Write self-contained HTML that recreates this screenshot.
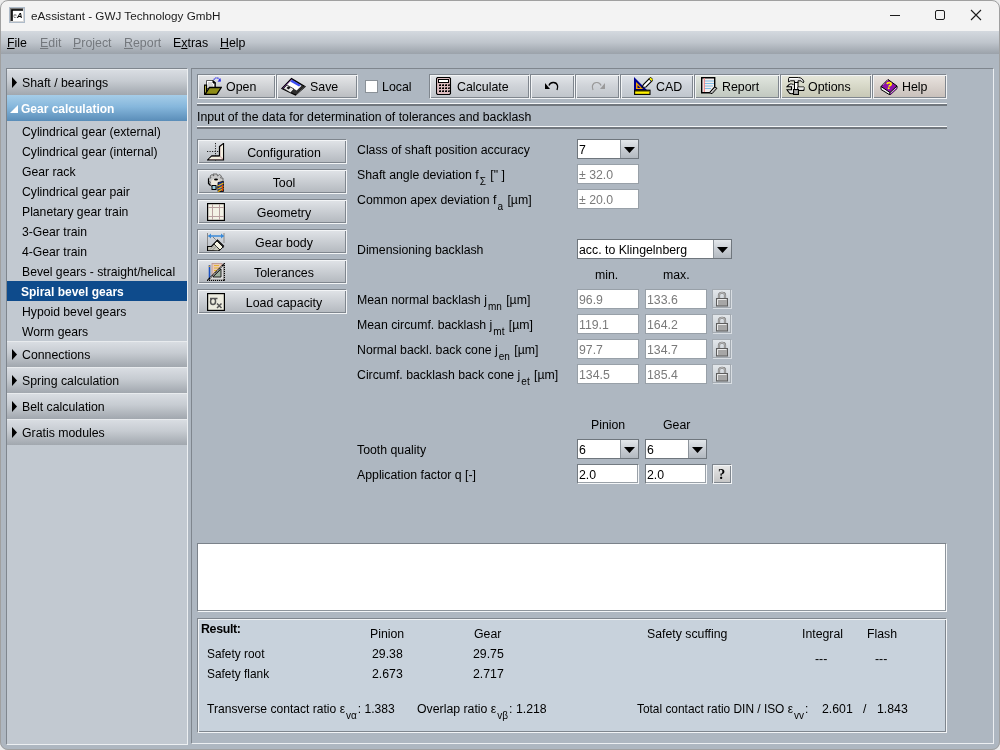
<!DOCTYPE html>
<html><head><meta charset="utf-8"><title>eAssistant</title>
<style>
*{margin:0;padding:0;box-sizing:border-box}
html,body{width:1000px;height:750px;overflow:hidden;background:#ececec}
body{font-family:"Liberation Sans",sans-serif;color:#000;position:relative}
.t{position:absolute;white-space:nowrap;line-height:14px}
.b{position:absolute}
.ic{position:absolute;line-height:0}
.ic svg{display:block}
sub{font-size:10px;vertical-align:-6px;line-height:0;position:relative;margin-left:1px;margin-right:1px}
.u{text-decoration:underline;text-underline-offset:1px}
</style></head><body>
<div class="b" style="left:0;top:0;width:1000px;height:750px;background:#aeb7c1;border-radius:8px;overflow:hidden;will-change:transform">
<div class="b" style="left:0px;top:0px;width:1000px;height:31px;background:#f3f3f3"></div>
<div class="ic" style="left:9px;top:7px"><svg width="16" height="16" viewBox="0 0 16 16">
<rect x="0.5" y="0.5" width="15" height="15" fill="#c6d0db" stroke="#aebbc9"/>
<path d="M1 1h14L1 15z" fill="#7a7a7a"/>
<path d="M15 1v14H1z" fill="#d6d6d6"/>
<rect x="3" y="3" width="11" height="11" fill="#fff"/>
<path d="M3 14V3h11" fill="none" stroke="#000" stroke-width="1.6"/>
<text x="4.2" y="11" font-family="Liberation Sans" font-size="6.5" fill="#666">e</text>
<text x="8" y="11" font-family="Liberation Sans" font-size="7.5" font-weight="bold" font-style="italic" fill="#000">A</text>
</svg></div>
<div class="t" style="left:31px;top:9px;font-size:11.7px;color:#1b1b1b">eAssistant - GWJ Technology GmbH</div>
<div class="b" style="left:890px;top:15px;width:10px;height:1px;background:#1b1b1b"></div>
<div class="b" style="left:935px;top:10px;width:10px;height:10px;border:1px solid #1b1b1b;border-radius:2px"></div>
<div class="ic" style="left:970px;top:9px"><svg width="12" height="12" viewBox="0 0 12 12"><path d="M1 1l10 10M11 1L1 11" stroke="#1b1b1b" stroke-width="1.1"/></svg></div>
<div class="b" style="left:0px;top:31px;width:1000px;height:23px;background:linear-gradient(#d4d9df,#bfc5cc 50%,#9ba2aa)"></div>
<div class="t" style="left:7px;top:36px;font-size:12.4px;"><span class="u">F</span>ile</div>
<div class="t" style="left:40px;top:36px;font-size:12.4px;color:#74787d"><span class="u">E</span>dit</div>
<div class="t" style="left:73px;top:36px;font-size:12.4px;color:#74787d"><span class="u">P</span>roject</div>
<div class="t" style="left:124px;top:36px;font-size:12.4px;color:#74787d"><span class="u">R</span>eport</div>
<div class="t" style="left:173px;top:36px;font-size:12.4px;">E<span class="u">x</span>tras</div>
<div class="t" style="left:220px;top:36px;font-size:12.4px;"><span class="u">H</span>elp</div>
<div class="b" style="left:6px;top:68px;width:182px;height:677px;background:#c2c9d1;border-left:1px solid #7f868e;border-top:1px solid #7f868e;border-right:1px solid #eceff2;border-bottom:1px solid #eceff2"></div>
<div class="b" style="left:7px;top:69px;width:180px;height:26px;border-top:1px solid #e8ebee;background:linear-gradient(#d9dde2,#c6cbd1 45%,#a1a7ae)"></div>
<div class="ic" style="left:12px;top:77px"><svg width="6" height="11" viewBox="0 0 6 11"><path d="M0 0l5 5.5L0 11z" fill="#000"/></svg></div>
<div class="t" style="left:22px;top:76px;font-size:12.3px;">Shaft / bearings</div>
<div class="b" style="left:7px;top:95px;width:180px;height:26px;background:linear-gradient(#a6cde8,#86b7dc 45%,#5a8db8)"></div>
<div class="ic" style="left:10px;top:105px"><svg width="8" height="8" viewBox="0 0 8 8"><path d="M0 8L8 0v8z" fill="#fff"/></svg></div>
<div class="t" style="left:21px;top:102px;font-size:12px;color:#fff;font-weight:bold">Gear calculation</div>
<div class="t" style="left:22px;top:125px;font-size:12.2px;">Cylindrical gear (external)</div>
<div class="t" style="left:22px;top:145px;font-size:12.2px;">Cylindrical gear (internal)</div>
<div class="t" style="left:22px;top:165px;font-size:12.2px;">Gear rack</div>
<div class="t" style="left:22px;top:185px;font-size:12.2px;">Cylindrical gear pair</div>
<div class="t" style="left:22px;top:205px;font-size:12.2px;">Planetary gear train</div>
<div class="t" style="left:22px;top:225px;font-size:12.2px;">3-Gear train</div>
<div class="t" style="left:22px;top:245px;font-size:12.2px;">4-Gear train</div>
<div class="t" style="left:22px;top:265px;font-size:12.2px;">Bevel gears - straight/helical</div>
<div class="b" style="left:7px;top:281px;width:180px;height:20px;background:#0e4b8c"></div>
<div class="t" style="left:21px;top:285px;font-size:12px;color:#fff;font-weight:bold">Spiral bevel gears</div>
<div class="t" style="left:22px;top:305px;font-size:12.2px;">Hypoid bevel gears</div>
<div class="t" style="left:22px;top:325px;font-size:12.2px;">Worm gears</div>
<div class="b" style="left:7px;top:341px;width:180px;height:26px;border-top:1px solid #e8ebee;background:linear-gradient(#d9dde2,#c6cbd1 45%,#a1a7ae)"></div>
<div class="ic" style="left:12px;top:349px"><svg width="6" height="11" viewBox="0 0 6 11"><path d="M0 0l5 5.5L0 11z" fill="#000"/></svg></div>
<div class="t" style="left:22px;top:348px;font-size:12.3px;">Connections</div>
<div class="b" style="left:7px;top:367px;width:180px;height:26px;border-top:1px solid #e8ebee;background:linear-gradient(#d9dde2,#c6cbd1 45%,#a1a7ae)"></div>
<div class="ic" style="left:12px;top:375px"><svg width="6" height="11" viewBox="0 0 6 11"><path d="M0 0l5 5.5L0 11z" fill="#000"/></svg></div>
<div class="t" style="left:22px;top:374px;font-size:12.3px;">Spring calculation</div>
<div class="b" style="left:7px;top:393px;width:180px;height:26px;border-top:1px solid #e8ebee;background:linear-gradient(#d9dde2,#c6cbd1 45%,#a1a7ae)"></div>
<div class="ic" style="left:12px;top:401px"><svg width="6" height="11" viewBox="0 0 6 11"><path d="M0 0l5 5.5L0 11z" fill="#000"/></svg></div>
<div class="t" style="left:22px;top:400px;font-size:12.3px;">Belt calculation</div>
<div class="b" style="left:7px;top:419px;width:180px;height:26px;border-top:1px solid #e8ebee;background:linear-gradient(#d9dde2,#c6cbd1 45%,#a1a7ae)"></div>
<div class="ic" style="left:12px;top:427px"><svg width="6" height="11" viewBox="0 0 6 11"><path d="M0 0l5 5.5L0 11z" fill="#000"/></svg></div>
<div class="t" style="left:22px;top:426px;font-size:12.3px;">Gratis modules</div>
<div class="b" style="left:191px;top:68px;width:803px;height:676px;border-left:1px solid #7f868e;border-top:1px solid #7f868e;border-right:1px solid #eceff2;border-bottom:1px solid #eceff2"></div>
<div class="b" style="left:197px;top:74px;width:79px;height:25px;background:linear-gradient(#e6e7e9,#d2d4d7 45%,#b9bcc0);border-left:1px solid #7f868e;border-top:1px solid #7f868e;border-right:1px solid #f2f4f6;border-bottom:1px solid #f2f4f6;box-shadow:inset 1px 1px 0 #f2f4f6,inset -1px -1px 0 #7f868e"></div>
<div class="t" style="left:226px;top:80px;font-size:12.4px;">Open</div>
<div class="ic" style="left:204px;top:77px"><svg width="18" height="18" viewBox="0 0 18 18">
<path d="M2.5 3.5h6.5l2.5 2.5v5.5h-9z" fill="#fff" stroke="#555" stroke-width="1"/>
<path d="M4 6h4M4 8h5M4 10h5" stroke="#aaa" stroke-width="1"/>
<path d="M9 3.5l2.5 2.5H9z" fill="#000" stroke="#000" stroke-width="1"/>
<path d="M11 11V6" stroke="#000" stroke-width="1.2"/>
<path d="M0.6 8.2h2v9H0.6z" fill="#d6d040" stroke="#000" stroke-width="1.2"/>
<path d="M1 17.3l4.5-6.8h11.8l-4.5 6.8z" fill="#8f8d17" stroke="#000" stroke-width="1.3"/>
<path d="M9.8 2.8c1.2-2.6 4.5-2.6 5.8 0" fill="none" stroke="#2828e8" stroke-width="1.1" stroke-dasharray="1.4 .7"/>
<path d="M13.5 4.8l3.5-.3-.6-3.4z" fill="#2828e8"/>
</svg></div>
<div class="b" style="left:276px;top:74px;width:82px;height:25px;background:linear-gradient(#e6e7e9,#d2d4d7 45%,#b9bcc0);border-left:1px solid #7f868e;border-top:1px solid #7f868e;border-right:1px solid #f2f4f6;border-bottom:1px solid #f2f4f6;box-shadow:inset 1px 1px 0 #f2f4f6,inset -1px -1px 0 #7f868e"></div>
<div class="t" style="left:310px;top:80px;font-size:12.4px;">Save</div>
<div class="ic" style="left:281px;top:77px"><svg width="25" height="19" viewBox="0 0 25 19">
<path d="M1 11.5L10.5 1.5l13.5 8-9.5 8.5z" fill="#2e2e2e" stroke="#000" stroke-width="1.2"/>
<path d="M1.5 11.5l9.5-9.5" stroke="#6a2a8a" stroke-width=".8"/>
<path d="M10.5 3l10 5.8-4.8 4.8-10-5.6z" fill="#fff"/>
<path d="M11 2.8l8.8 5.2-1.8 1.6-8.8-5z" fill="#3a4cf5"/>
<path d="M2.5 11.5l3.5-3.5 7 4-3.5 3.8z" fill="#e6e6e6" stroke="#000" stroke-width=".6"/>
<path d="M5.5 11l1.8-1.8 2.2 1.3-1.8 1.9z" fill="#111"/>
<path d="M15 17.5l9-8" stroke="#555" stroke-width="1"/>
</svg></div>
<div class="b" style="left:429px;top:74px;width:101px;height:25px;background:linear-gradient(#e3e6ea,#d0d4d9 45%,#bfc4ca);border-left:1px solid #7f868e;border-top:1px solid #7f868e;border-right:1px solid #f2f4f6;border-bottom:1px solid #f2f4f6;box-shadow:inset 1px 1px 0 #f2f4f6,inset -1px -1px 0 #7f868e"></div>
<div class="t" style="left:457px;top:80px;font-size:12.4px;">Calculate</div>
<div class="ic" style="left:436px;top:77px"><svg width="16" height="18" viewBox="0 0 16 18">
<path d="M1.5 0.5h12l1 1v15l-1 1h-12l-1-1v-15z" fill="#dcbcbf" stroke="#000" stroke-width="1.1"/>
<rect x="2.5" y="2.5" width="10" height="3" fill="#fff" stroke="#000" stroke-width="1"/>
<g fill="#000">
<path d="M3 8.5h2v-1h-1v1h-1zM6 8.5h2v-1h-1v1h-1zM9 8.5h2v-1h-1v1h-1zM12 8.5h2v-1h-1v1h-1z"/>
<path d="M3 11.5h2v-1h-1v1h-1zM6 11.5h2v-1h-1v1h-1zM9 11.5h2v-1h-1v1h-1zM12 11.5h2v-1h-1v1h-1z"/>
<path d="M3 14.5h2v-1h-1v1h-1zM6 14.5h2v-1h-1v1h-1zM9 14.5h2v-1h-1v1h-1zM12 14.5h2v-1h-1v1h-1z"/>
</g>
<g fill="#000"><rect x="3" y="7.5" width="2" height="1.5"/><rect x="6" y="7.5" width="2" height="1.5"/><rect x="9" y="7.5" width="2" height="1.5"/><rect x="12" y="7.5" width="1.5" height="1.5"/>
<rect x="3" y="10.5" width="2" height="1.5"/><rect x="6" y="10.5" width="2" height="1.5"/><rect x="9" y="10.5" width="2" height="1.5"/><rect x="12" y="10.5" width="1.5" height="1.5"/>
<rect x="3" y="13.5" width="2" height="1.5"/><rect x="6" y="13.5" width="2" height="1.5"/><rect x="9" y="13.5" width="2" height="1.5"/><rect x="12" y="13.5" width="1.5" height="1.5"/></g>
</svg></div>
<div class="b" style="left:530px;top:74px;width:45px;height:25px;background:linear-gradient(#e3e6ea,#d0d4d9 45%,#bfc4ca);border-left:1px solid #7f868e;border-top:1px solid #7f868e;border-right:1px solid #f2f4f6;border-bottom:1px solid #f2f4f6;box-shadow:inset 1px 1px 0 #f2f4f6,inset -1px -1px 0 #7f868e"></div>
<div class="ic" style="left:545px;top:81px"><svg width="14" height="10" viewBox="0 0 14 10">
<path d="M4 4.5C5 1 11 0 12.5 4.5c.5 1.5 0 3 -0.5 4.5" fill="none" stroke="#000" stroke-width="1.3"/>
<path d="M0 2l5 6H0z" fill="#000"/>
</svg></div>
<div class="b" style="left:575px;top:74px;width:45px;height:25px;background:linear-gradient(#e3e6ea,#d0d4d9 45%,#bfc4ca);border-left:1px solid #7f868e;border-top:1px solid #7f868e;border-right:1px solid #f2f4f6;border-bottom:1px solid #f2f4f6;box-shadow:inset 1px 1px 0 #f2f4f6,inset -1px -1px 0 #7f868e"></div>
<div class="ic" style="left:591px;top:81px"><svg width="14" height="10" viewBox="0 0 14 10">
<path d="M10 4.5C9 1 3 0 1.5 4.5c-.5 1.5 0 3 .5 4.5" fill="none" stroke="#999" stroke-width="1.2"/>
<path d="M14 2l-5 6h5z" fill="#9a9a9a"/>
</svg></div>
<div class="b" style="left:620px;top:74px;width:74px;height:25px;background:linear-gradient(#e0e4ea,#ced3da 45%,#bfc5cc);border-left:1px solid #7f868e;border-top:1px solid #7f868e;border-right:1px solid #f2f4f6;border-bottom:1px solid #f2f4f6;box-shadow:inset 1px 1px 0 #f2f4f6,inset -1px -1px 0 #7f868e"></div>
<div class="t" style="left:656px;top:80px;font-size:12.4px;">CAD</div>
<div class="ic" style="left:634px;top:76px"><svg width="19" height="19" viewBox="0 0 19 19">
<path d="M1 3.5v10.5h10.5z" fill="#f5a300" stroke="#000090" stroke-width="2"/>
<path d="M3.5 9v3h3z" fill="#000090"/>
<rect x="0.6" y="14.2" width="15.4" height="4.2" fill="#fff000" stroke="#000" stroke-width="1.1"/>
<path d="M2 14.5v1.3M4 14.5v1.3M6 14.5v1.3M8 14.5v1.3M10 14.5v1.3M12 14.5v1.3M14 14.5v1.3" stroke="#000" stroke-width="1"/>
<path d="M8.2 11.2l1.2-2.7 6-6 2.5 2.5-6 6z" fill="#fff" stroke="#000" stroke-width="1.1"/>
<path d="M14.8 3l1.8-1.8 2.5 2.5-1.8 1.8z" fill="#f8f000" stroke="#000" stroke-width=".8"/>
<circle cx="16.6" cy="4.4" r=".5" fill="#2030a0"/>
</svg></div>
<div class="b" style="left:694px;top:74px;width:86px;height:25px;background:linear-gradient(#e2e7e0,#d2d8d0 45%,#c0c7bf);border-left:1px solid #7f868e;border-top:1px solid #7f868e;border-right:1px solid #f2f4f6;border-bottom:1px solid #f2f4f6;box-shadow:inset 1px 1px 0 #f2f4f6,inset -1px -1px 0 #7f868e"></div>
<div class="t" style="left:722px;top:80px;font-size:12.4px;">Report</div>
<div class="ic" style="left:701px;top:77px"><svg width="17" height="17" viewBox="0 0 17 17">
<path d="M0.7 0.7h13v9.5l-5 5.5H0.7z" fill="#f3eeee" stroke="#000" stroke-width="1.4"/>
<path d="M3 4h10M3 6.5h10M3 9h9M3 11.5h7" stroke="#7fbde6" stroke-width="1"/>
<path d="M3.3 1v14" stroke="#f07f7f" stroke-width="1"/>
<path d="M8.5 15.7l5-5.5 2.5 1-5 5.5z" fill="#bbb" stroke="#000" stroke-width="1"/>
</svg></div>
<div class="b" style="left:780px;top:74px;width:92px;height:25px;background:linear-gradient(#e7e8dc,#d8d9c9 45%,#c6c7b5);border-left:1px solid #7f868e;border-top:1px solid #7f868e;border-right:1px solid #f2f4f6;border-bottom:1px solid #f2f4f6;box-shadow:inset 1px 1px 0 #f2f4f6,inset -1px -1px 0 #7f868e"></div>
<div class="t" style="left:808px;top:80px;font-size:12.4px;">Options</div>
<div class="ic" style="left:786px;top:76px"><svg width="19" height="19" viewBox="0 0 19 19">
<path d="M3 1.5h9.5c2.5 0 4.5 1.5 5.5 4.5l-1 .8-2-2H12v2H8.5v-2H4.5L2.5 6V2.5z" fill="#e2e2e2" stroke="#111" stroke-width="1"/>
<path d="M4 2.5h8" stroke="#fff" stroke-width="1"/>
<rect x="8.5" y="6.5" width="3.5" height="7" fill="#fff" stroke="#000" stroke-width="1"/>
<path d="M7.5 8.5c-2-1-4.5-.5-5.5 1.2l-1 1h4.5v3H1l1 1.5c1 2 3.5 3 6 2" fill="#e6e6e6" stroke="#000" stroke-width="1.1"/>
<path d="M12 11h6v3.5h-6z" fill="#d9d9d9" stroke="#000" stroke-width="1"/>
<path d="M12 12h6" stroke="#fff" stroke-width="1"/>
<rect x="7.5" y="13.5" width="5" height="5" fill="#777" stroke="#000" stroke-width="1"/>
<path d="M8.5 14.5h1v1h-1zM10.5 14.5h1v1h-1zM9.5 15.5h1v1h-1zM8.5 16.5h1v1h-1zM10.5 16.5h1v1h-1z" fill="#eee"/>
</svg></div>
<div class="b" style="left:872px;top:74px;width:75px;height:25px;background:linear-gradient(#e9e4e0,#dad3ce 45%,#c7bfba);border-left:1px solid #7f868e;border-top:1px solid #7f868e;border-right:1px solid #f2f4f6;border-bottom:1px solid #f2f4f6;box-shadow:inset 1px 1px 0 #f2f4f6,inset -1px -1px 0 #7f868e"></div>
<div class="t" style="left:902px;top:80px;font-size:12.4px;">Help</div>
<div class="ic" style="left:880px;top:78px"><svg width="18" height="17" viewBox="0 0 18 17">
<path d="M1 8.5L8 1.5l9 6.5-7 7.5z" fill="#8c10a8" stroke="#000" stroke-width="1"/>
<path d="M1.5 2.5" />
<path d="M3 7l5-5" stroke="#d8b0e0" stroke-width=".8" stroke-dasharray="1 1"/>
<path d="M1 8.5v3l9 5.5v-2.5z" fill="#f0f0f0" stroke="#000" stroke-width="1"/>
<path d="M10 17l7-6.5V8l-7 6.5z" fill="#e0e0e0" stroke="#000" stroke-width="1"/>
<path d="M10 16.5l7-6.5" stroke="#8c10a8" stroke-width="1"/>
<path d="M7 6.2c.3-1.8 4.2-2.2 4.2 0c0 1.3-2 1.3-2.2 2.5" fill="none" stroke="#fff200" stroke-width="1.7"/>
<circle cx="8.7" cy="10.3" r="1" fill="#fff200"/>
</svg></div>
<div class="b" style="left:365px;top:80px;width:13px;height:13px;background:#fff;border:1px solid #8a9198"></div>
<div class="t" style="left:382px;top:80px;font-size:12.4px;">Local</div>
<div class="b" style="left:197px;top:103px;width:750px;height:1px;background:#f4f6f8"></div>
<div class="b" style="left:197px;top:104px;width:750px;height:2px;background:#71777e"></div>
<div class="b" style="left:197px;top:126px;width:750px;height:1px;background:#f4f6f8"></div>
<div class="b" style="left:197px;top:127px;width:750px;height:2px;background:#71777e"></div>
<div class="t" style="left:197px;top:110px;font-size:12.3px;">Input of the data for determination of tolerances and backlash</div>
<div class="b" style="left:197px;top:139px;width:150px;height:25px;background:linear-gradient(#e1e4e8,#ccd0d5 45%,#b3b8be);border-left:1px solid #7f868e;border-top:1px solid #7f868e;border-right:1px solid #f2f4f6;border-bottom:1px solid #f2f4f6;box-shadow:inset 1px 1px 0 #f2f4f6,inset -1px -1px 0 #7f868e"></div>
<div class="t" style="left:222px;top:146px;width:124px;text-align:center;font-size:12.4px">Configuration</div>
<div class="ic" style="left:207px;top:143px"><svg width="18" height="18" viewBox="0 0 18 18">
<path d="M8.5 0v18M0 8.5h15" stroke="#222" stroke-width="1" stroke-dasharray="1.2 1.3"/>
<path d="M12.5 3.5l4-3v16.5H0.5l4-4h8z" fill="#d6b3b3" stroke="#000" stroke-width="1.2"/>
<path d="M13.5 4v9l2.5 2.5V1.5zM2 16l3-2.5h7.5L15 16z" fill="#f3efe0"/>
<path d="M12.5 3.5v9.5h-8" fill="none" stroke="#000" stroke-width="1"/>
</svg></div>
<div class="b" style="left:197px;top:169px;width:150px;height:25px;background:linear-gradient(#e1e4e8,#ccd0d5 45%,#b3b8be);border-left:1px solid #7f868e;border-top:1px solid #7f868e;border-right:1px solid #f2f4f6;border-bottom:1px solid #f2f4f6;box-shadow:inset 1px 1px 0 #f2f4f6,inset -1px -1px 0 #7f868e"></div>
<div class="t" style="left:222px;top:176px;width:124px;text-align:center;font-size:12.4px">Tool</div>
<div class="ic" style="left:207px;top:173px"><svg width="18" height="19" viewBox="0 0 18 19">
<path d="M6 1h4l.5 2 2-1.5 2 1.5-1 2h2.5v3.5l-2 .5 1 2.5-2 2-2-1-.5 2.5H7l-.5-2.5-2 1-2-2 1-2.5-2-.5V5h2.5l-1-2 2-1.5 2 1.5z" fill="#c8c8c8" stroke="#555" stroke-width=".8"/>
<path d="M4 9c1-4 7-4 9 -1l-1 5H5z" fill="#eee9dc"/>
<ellipse cx="9" cy="6.5" rx="2" ry="1" fill="#000"/>
<path d="M1.5 5.5v5l2 2" fill="none" stroke="#000" stroke-width="1.2"/>
<rect x="5" y="12.5" width="4" height="4" fill="#9fd0e0" stroke="#000" stroke-width="1"/>
<path d="M11 9.5l5.5-1v10H11z" fill="#1a3aa0" stroke="#000" stroke-width=".8"/>
<path d="M11 13l5.5-3M11 16l5.5-3M11 18.5l5.5-3" stroke="#f5b400" stroke-width="1.4"/>
<path d="M15.5 12v6" stroke="#e04000" stroke-width="1.2"/>
</svg></div>
<div class="b" style="left:197px;top:199px;width:150px;height:25px;background:linear-gradient(#e1e4e8,#ccd0d5 45%,#b3b8be);border-left:1px solid #7f868e;border-top:1px solid #7f868e;border-right:1px solid #f2f4f6;border-bottom:1px solid #f2f4f6;box-shadow:inset 1px 1px 0 #f2f4f6,inset -1px -1px 0 #7f868e"></div>
<div class="t" style="left:222px;top:206px;width:124px;text-align:center;font-size:12.4px">Geometry</div>
<div class="ic" style="left:207px;top:203px"><svg width="18" height="18" viewBox="0 0 18 18">
<rect x="0.6" y="0.6" width="16.8" height="16.8" fill="#f3f2e6" stroke="#000" stroke-width="1.2"/>
<path d="M5.5 1v16M12.5 1v16M1 4.5h16M1 13.5h16" stroke="#b8a0a0" stroke-width="1"/>
</svg></div>
<div class="b" style="left:197px;top:229px;width:150px;height:25px;background:linear-gradient(#e1e4e8,#ccd0d5 45%,#b3b8be);border-left:1px solid #7f868e;border-top:1px solid #7f868e;border-right:1px solid #f2f4f6;border-bottom:1px solid #f2f4f6;box-shadow:inset 1px 1px 0 #f2f4f6,inset -1px -1px 0 #7f868e"></div>
<div class="t" style="left:222px;top:236px;width:124px;text-align:center;font-size:12.4px">Gear body</div>
<div class="ic" style="left:207px;top:233px"><svg width="18" height="18" viewBox="0 0 18 18">
<path d="M0.5 0v14M17 0v10" stroke="#888" stroke-width="1"/>
<path d="M1.5 3h15" stroke="#3a8ad8" stroke-width="1.4"/>
<path d="M1 3l3-2.5v5zM17 3l-3-2.5v5z" fill="#3a8ad8"/>
<path d="M0.5 17.5v-4h4L10.5 7l6 6-5 5z" fill="#c9c8bb" stroke="#000" stroke-width="1.2"/>
<path d="M10 8l6 6-3 3-6-6z" fill="#f5f4e3" stroke="#000" stroke-width=".8"/>
<path d="M3 16.5l4-4M5.5 17l4-4" stroke="#888" stroke-width=".8"/>
<path d="M6 4l11 11" stroke="#000" stroke-width=".6" stroke-dasharray="1 .8"/>
</svg></div>
<div class="b" style="left:197px;top:259px;width:150px;height:25px;background:linear-gradient(#e1e4e8,#ccd0d5 45%,#b3b8be);border-left:1px solid #7f868e;border-top:1px solid #7f868e;border-right:1px solid #f2f4f6;border-bottom:1px solid #f2f4f6;box-shadow:inset 1px 1px 0 #f2f4f6,inset -1px -1px 0 #7f868e"></div>
<div class="t" style="left:222px;top:266px;width:124px;text-align:center;font-size:12.4px">Tolerances</div>
<div class="ic" style="left:207px;top:263px"><svg width="18" height="18" viewBox="0 0 18 18">
<rect x="5" y="0.5" width="10" height="13" fill="#e9c9b6" stroke="#b49090" stroke-width=".8"/>
<path d="M7 2.5h5M7 5h5M7 7.5h5M7 10h4" stroke="#e0b020" stroke-width=".9"/>
<path d="M2.5 2v14" stroke="#1a50c0" stroke-width="1.6"/>
<path d="M2.5 2l-.8 2h1.6z" fill="#e0a020"/>
<path d="M0.7 17.3L17.3 0.7v16.6z" fill="#d8d8d8" stroke="#000" stroke-width="1.3"/>
<path d="M6 14l8-8v8z" fill="#a0b0a0" stroke="#000" stroke-width=".8"/>
<path d="M1 17.3h16.3M17.3 1v16" stroke="#fff" stroke-width=".8" stroke-dasharray="1 1"/>
<path d="M3 15L15 3" stroke="#fff" stroke-width=".8" stroke-dasharray="1 1"/>
</svg></div>
<div class="b" style="left:197px;top:289px;width:150px;height:25px;background:linear-gradient(#e1e4e8,#ccd0d5 45%,#b3b8be);border-left:1px solid #7f868e;border-top:1px solid #7f868e;border-right:1px solid #f2f4f6;border-bottom:1px solid #f2f4f6;box-shadow:inset 1px 1px 0 #f2f4f6,inset -1px -1px 0 #7f868e"></div>
<div class="t" style="left:222px;top:296px;width:124px;text-align:center;font-size:12.4px">Load capacity</div>
<div class="ic" style="left:207px;top:293px"><svg width="18" height="18" viewBox="0 0 18 18">
<rect x="0.6" y="0.6" width="16.8" height="16.8" fill="#ecebdf" stroke="#000" stroke-width="1.2"/>
<path d="M3 5.5h7.5M5 5.5c-2 1-2.2 6 1 6s3.2-5 1.2-6" fill="none" stroke="#555" stroke-width="1.5"/>
<path d="M10 10.5l4.5 4.5M14.5 10.5l-4.5 4.5" stroke="#555" stroke-width="1.5"/>
</svg></div>
<div class="t" style="left:357px;top:143px;font-size:12.3px;">Class of shaft position accuracy</div>
<div class="b" style="left:577px;top:139px;width:62px;height:20px;background:#fff;border:1px solid #6f767d"></div>
<div class="b" style="left:620px;top:140px;width:18px;height:18px;background:linear-gradient(#e3e7eb,#c9ced4 50%,#b3b9c0);border-left:1px solid #8d949b"></div>
<div class="ic" style="left:624px;top:147px"><svg width="11" height="6" viewBox="0 0 11 6"><path d="M0 0h11L5.5 6z" fill="#000"/></svg></div>
<div class="t" style="left:579px;top:143px;font-size:12.3px;">7</div>
<div class="t" style="left:357px;top:168px;font-size:12.3px;">Shaft angle deviation f<sub>&Sigma;</sub> [&quot; ]</div>
<div class="b" style="left:577px;top:164px;width:62px;height:20px;background:#fff;border:1px solid #98a0a8"></div>
<div class="t" style="left:579px;top:168px;font-size:12.3px;color:#7a7a7a">&plusmn; 32.0</div>
<div class="t" style="left:357px;top:193px;font-size:12.3px;">Common apex deviation f<sub>a</sub> [&micro;m]</div>
<div class="b" style="left:577px;top:189px;width:62px;height:20px;background:#fff;border:1px solid #98a0a8"></div>
<div class="t" style="left:579px;top:193px;font-size:12.3px;color:#7a7a7a">&plusmn; 20.0</div>
<div class="t" style="left:357px;top:243px;font-size:12.3px;">Dimensioning backlash</div>
<div class="b" style="left:577px;top:239px;width:155px;height:20px;background:#fff;border:1px solid #6f767d"></div>
<div class="b" style="left:713px;top:240px;width:18px;height:18px;background:linear-gradient(#e3e7eb,#c9ced4 50%,#b3b9c0);border-left:1px solid #8d949b"></div>
<div class="ic" style="left:717px;top:247px"><svg width="11" height="6" viewBox="0 0 11 6"><path d="M0 0h11L5.5 6z" fill="#000"/></svg></div>
<div class="t" style="left:579px;top:243px;font-size:12.3px;">acc. to Klingelnberg</div>
<div class="t" style="left:595px;top:268px;font-size:12.3px;">min.</div>
<div class="t" style="left:663px;top:268px;font-size:12.3px;">max.</div>
<div class="t" style="left:357px;top:293px;font-size:12.3px;">Mean normal backlash j<sub>mn</sub> [&micro;m]</div>
<div class="b" style="left:577px;top:289px;width:62px;height:20px;background:#fff;border:1px solid #98a0a8"></div>
<div class="t" style="left:579px;top:293px;font-size:12.3px;color:#7a7a7a">96.9</div>
<div class="b" style="left:645px;top:289px;width:62px;height:20px;background:#fff;border:1px solid #98a0a8"></div>
<div class="t" style="left:647px;top:293px;font-size:12.3px;color:#7a7a7a">133.6</div>
<div class="b" style="left:712px;top:289px;width:19px;height:19px;background:linear-gradient(#e2e6ea,#c4cad0);border:1px solid #a3aab1;box-shadow:1px 1px 0 #d8dde2"></div>
<div class="ic" style="left:716px;top:291px"><svg width="12" height="16" viewBox="0 0 12 16">
<path d="M3 7V4c0-3 6-3 6 0v3" fill="none" stroke="#6d6d6d" stroke-width="2.2"/>
<path d="M3 7V4c0-3 6-3 6 0v3" fill="none" stroke="#e4e4e4" stroke-width=".8"/>
<rect x="0.5" y="7.5" width="11" height="7.5" fill="#a6a6a6" stroke="#5d5d5d" stroke-width="1"/>
<path d="M1.5 14V8.5h9" fill="none" stroke="#eaeaea" stroke-width="1"/>
</svg></div>
<div class="t" style="left:357px;top:318px;font-size:12.3px;">Mean circumf. backlash j<sub>mt</sub> [&micro;m]</div>
<div class="b" style="left:577px;top:314px;width:62px;height:20px;background:#fff;border:1px solid #98a0a8"></div>
<div class="t" style="left:579px;top:318px;font-size:12.3px;color:#7a7a7a">119.1</div>
<div class="b" style="left:645px;top:314px;width:62px;height:20px;background:#fff;border:1px solid #98a0a8"></div>
<div class="t" style="left:647px;top:318px;font-size:12.3px;color:#7a7a7a">164.2</div>
<div class="b" style="left:712px;top:314px;width:19px;height:19px;background:linear-gradient(#e2e6ea,#c4cad0);border:1px solid #a3aab1;box-shadow:1px 1px 0 #d8dde2"></div>
<div class="ic" style="left:716px;top:316px"><svg width="12" height="16" viewBox="0 0 12 16">
<path d="M3 7V4c0-3 6-3 6 0v3" fill="none" stroke="#6d6d6d" stroke-width="2.2"/>
<path d="M3 7V4c0-3 6-3 6 0v3" fill="none" stroke="#e4e4e4" stroke-width=".8"/>
<rect x="0.5" y="7.5" width="11" height="7.5" fill="#a6a6a6" stroke="#5d5d5d" stroke-width="1"/>
<path d="M1.5 14V8.5h9" fill="none" stroke="#eaeaea" stroke-width="1"/>
</svg></div>
<div class="t" style="left:357px;top:343px;font-size:12.3px;">Normal backl. back cone j<sub>en</sub> [&micro;m]</div>
<div class="b" style="left:577px;top:339px;width:62px;height:20px;background:#fff;border:1px solid #98a0a8"></div>
<div class="t" style="left:579px;top:343px;font-size:12.3px;color:#7a7a7a">97.7</div>
<div class="b" style="left:645px;top:339px;width:62px;height:20px;background:#fff;border:1px solid #98a0a8"></div>
<div class="t" style="left:647px;top:343px;font-size:12.3px;color:#7a7a7a">134.7</div>
<div class="b" style="left:712px;top:339px;width:19px;height:19px;background:linear-gradient(#e2e6ea,#c4cad0);border:1px solid #a3aab1;box-shadow:1px 1px 0 #d8dde2"></div>
<div class="ic" style="left:716px;top:341px"><svg width="12" height="16" viewBox="0 0 12 16">
<path d="M3 7V4c0-3 6-3 6 0v3" fill="none" stroke="#6d6d6d" stroke-width="2.2"/>
<path d="M3 7V4c0-3 6-3 6 0v3" fill="none" stroke="#e4e4e4" stroke-width=".8"/>
<rect x="0.5" y="7.5" width="11" height="7.5" fill="#a6a6a6" stroke="#5d5d5d" stroke-width="1"/>
<path d="M1.5 14V8.5h9" fill="none" stroke="#eaeaea" stroke-width="1"/>
</svg></div>
<div class="t" style="left:357px;top:368px;font-size:12.3px;">Circumf. backlash back cone j<sub>et</sub> [&micro;m]</div>
<div class="b" style="left:577px;top:364px;width:62px;height:20px;background:#fff;border:1px solid #98a0a8"></div>
<div class="t" style="left:579px;top:368px;font-size:12.3px;color:#7a7a7a">134.5</div>
<div class="b" style="left:645px;top:364px;width:62px;height:20px;background:#fff;border:1px solid #98a0a8"></div>
<div class="t" style="left:647px;top:368px;font-size:12.3px;color:#7a7a7a">185.4</div>
<div class="b" style="left:712px;top:364px;width:19px;height:19px;background:linear-gradient(#e2e6ea,#c4cad0);border:1px solid #a3aab1;box-shadow:1px 1px 0 #d8dde2"></div>
<div class="ic" style="left:716px;top:366px"><svg width="12" height="16" viewBox="0 0 12 16">
<path d="M3 7V4c0-3 6-3 6 0v3" fill="none" stroke="#6d6d6d" stroke-width="2.2"/>
<path d="M3 7V4c0-3 6-3 6 0v3" fill="none" stroke="#e4e4e4" stroke-width=".8"/>
<rect x="0.5" y="7.5" width="11" height="7.5" fill="#a6a6a6" stroke="#5d5d5d" stroke-width="1"/>
<path d="M1.5 14V8.5h9" fill="none" stroke="#eaeaea" stroke-width="1"/>
</svg></div>
<div class="t" style="left:591px;top:418px;font-size:12.3px;">Pinion</div>
<div class="t" style="left:663px;top:418px;font-size:12.3px;">Gear</div>
<div class="t" style="left:357px;top:443px;font-size:12.3px;">Tooth quality</div>
<div class="b" style="left:577px;top:439px;width:62px;height:20px;background:#fff;border:1px solid #6f767d"></div>
<div class="b" style="left:620px;top:440px;width:18px;height:18px;background:linear-gradient(#e3e7eb,#c9ced4 50%,#b3b9c0);border-left:1px solid #8d949b"></div>
<div class="ic" style="left:624px;top:447px"><svg width="11" height="6" viewBox="0 0 11 6"><path d="M0 0h11L5.5 6z" fill="#000"/></svg></div>
<div class="t" style="left:579px;top:443px;font-size:12.3px;">6</div>
<div class="b" style="left:645px;top:439px;width:62px;height:20px;background:#fff;border:1px solid #6f767d"></div>
<div class="b" style="left:688px;top:440px;width:18px;height:18px;background:linear-gradient(#e3e7eb,#c9ced4 50%,#b3b9c0);border-left:1px solid #8d949b"></div>
<div class="ic" style="left:692px;top:447px"><svg width="11" height="6" viewBox="0 0 11 6"><path d="M0 0h11L5.5 6z" fill="#000"/></svg></div>
<div class="t" style="left:647px;top:443px;font-size:12.3px;">6</div>
<div class="t" style="left:357px;top:468px;font-size:12.3px;">Application factor q [-]</div>
<div class="b" style="left:577px;top:464px;width:62px;height:20px;background:#fff;border-left:1px solid #737a81;border-top:1px solid #737a81;border-right:1px solid #f4f6f8;border-bottom:1px solid #f4f6f8;box-shadow:inset -1px -1px 0 #9aa1a8"></div>
<div class="t" style="left:579px;top:468px;font-size:12.3px;">2.0</div>
<div class="b" style="left:645px;top:464px;width:62px;height:20px;background:#fff;border-left:1px solid #737a81;border-top:1px solid #737a81;border-right:1px solid #f4f6f8;border-bottom:1px solid #f4f6f8;box-shadow:inset -1px -1px 0 #9aa1a8"></div>
<div class="t" style="left:647px;top:468px;font-size:12.3px;">2.0</div>
<div class="b" style="left:712px;top:464px;width:20px;height:20px;background:linear-gradient(#e8e8e8,#c4c4c4);border-left:1px solid #7f868e;border-top:1px solid #7f868e;border-right:1px solid #f2f4f6;border-bottom:1px solid #f2f4f6;box-shadow:inset 1px 1px 0 #f2f4f6,inset -1px -1px 0 #7f868e"></div>
<div class="t" style="left:718px;top:467px;font-size:14.5px;font-family:'Liberation Serif',serif;font-weight:bold">?</div>
<div class="b" style="left:197px;top:543px;width:750px;height:69px;background:#fff;border-left:1px solid #7b828a;border-top:1px solid #7b828a;border-right:1px solid #f4f6f8;border-bottom:1px solid #f4f6f8;box-shadow:inset -1px -1px 0 #8e959c"></div>
<div class="b" style="left:197px;top:618px;width:750px;height:115px;background:#c8d2dc;border-left:1px solid #7f868e;border-top:1px solid #7f868e;border-right:1px solid #f2f4f6;border-bottom:1px solid #f2f4f6;box-shadow:inset 1px 1px 0 #f2f4f6,inset -1px -1px 0 #7f868e"></div>
<div class="t" style="left:201px;top:622px;font-size:12.4px;font-weight:bold;letter-spacing:-0.35px">Result:</div>
<div class="t" style="left:370px;top:627px;font-size:12.3px;">Pinion</div>
<div class="t" style="left:474px;top:627px;font-size:12.3px;">Gear</div>
<div class="t" style="left:207px;top:647px;font-size:11.9px;">Safety root</div>
<div class="t" style="left:372px;top:647px;font-size:12.3px;">29.38</div>
<div class="t" style="left:473px;top:647px;font-size:12.3px;">29.75</div>
<div class="t" style="left:207px;top:667px;font-size:11.9px;">Safety flank</div>
<div class="t" style="left:372px;top:667px;font-size:12.3px;">2.673</div>
<div class="t" style="left:473px;top:667px;font-size:12.3px;">2.717</div>
<div class="t" style="left:647px;top:627px;font-size:12.3px;">Safety scuffing</div>
<div class="t" style="left:802px;top:627px;font-size:12.3px;">Integral</div>
<div class="t" style="left:867px;top:627px;font-size:12.3px;">Flash</div>
<div class="t" style="left:815px;top:652px;font-size:12.3px;">---</div>
<div class="t" style="left:875px;top:652px;font-size:12.3px;">---</div>
<div class="t" style="left:207px;top:702px;font-size:12.1px;">Transverse contact ratio &epsilon;<sub>v&alpha;</sub>: 1.383</div>
<div class="t" style="left:417px;top:702px;font-size:12.3px;">Overlap ratio &epsilon;<sub>v&beta;</sub>: 1.218</div>
<div class="t" style="left:637px;top:702px;font-size:11.9px;">Total contact ratio DIN / ISO &epsilon;<sub>vv</sub>:</div>
<div class="t" style="left:822px;top:702px;font-size:12.3px;">2.601</div>
<div class="t" style="left:863px;top:702px;font-size:12.3px;">/</div>
<div class="t" style="left:877px;top:702px;font-size:12.3px;">1.843</div>
</div>
<div class="b" style="left:0;top:0;width:1000px;height:750px;border:1px solid #a0a0a0;border-radius:8px"></div>
</body></html>
